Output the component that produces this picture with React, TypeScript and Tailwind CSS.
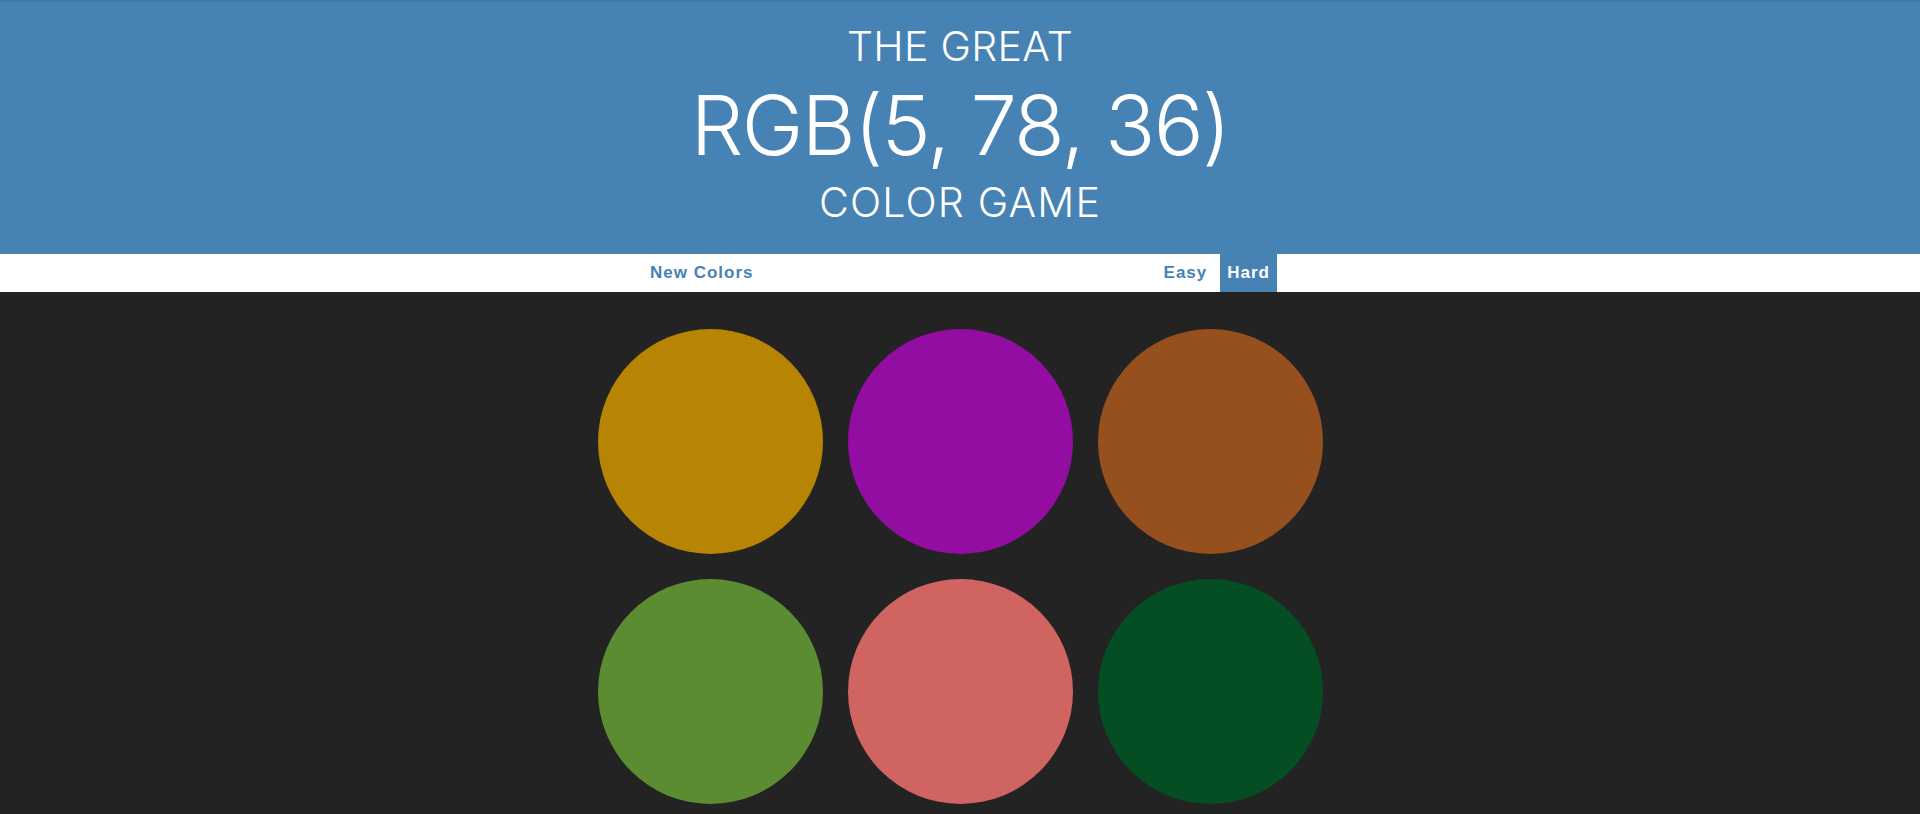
import React from "react";

const colors = ["#b88404", "#940da3", "#96501e", "#5c8c32", "#d06461", "#054e24"];

export default function App() {
  return (
    <div className="min-h-screen bg-[#232323]">
      {/* Header */}
      <header className="bg-[#4682b4] border-t-2 border-[#3f78a8] pt-[20px] pb-[30px] text-center text-white font-['Inter','Noto_Sans',sans-serif] font-light uppercase">
        <div className="text-[41px] leading-[48px] tracking-[0.3px]">The Great</div>
        <div className="text-[83px] leading-[110px] tracking-[-1.6px]">RGB(5, 78, 36)</div>
        <div className="text-[41px] leading-[44px] tracking-[1.2px]">Color Game</div>
      </header>

      {/* Stripe */}
      <nav className="bg-white h-[38px] flex justify-center font-['Liberation_Sans',Arial,sans-serif] font-bold text-[17px] tracking-[1px]">
        <div className="w-[634px] flex justify-between">
          <button className="h-full px-[7px] text-[#4682b4]">New Colors</button>
          <div className="flex gap-[6px] h-full">
            <button className="h-full px-[7px] text-[#4682b4]">Easy</button>
            <button className="h-full px-[7px] bg-[#4682b4] text-white">Hard</button>
          </div>
        </div>
      </nav>

      {/* Squares */}
      <main className="mx-auto mt-[37px] w-[725px] grid grid-cols-3 gap-[25px]">
        {colors.map((c) => (
          <div key={c} className="w-[225px] h-[225px] rounded-full" style={{ backgroundColor: c }} />
        ))}
      </main>
    </div>
  );
}
